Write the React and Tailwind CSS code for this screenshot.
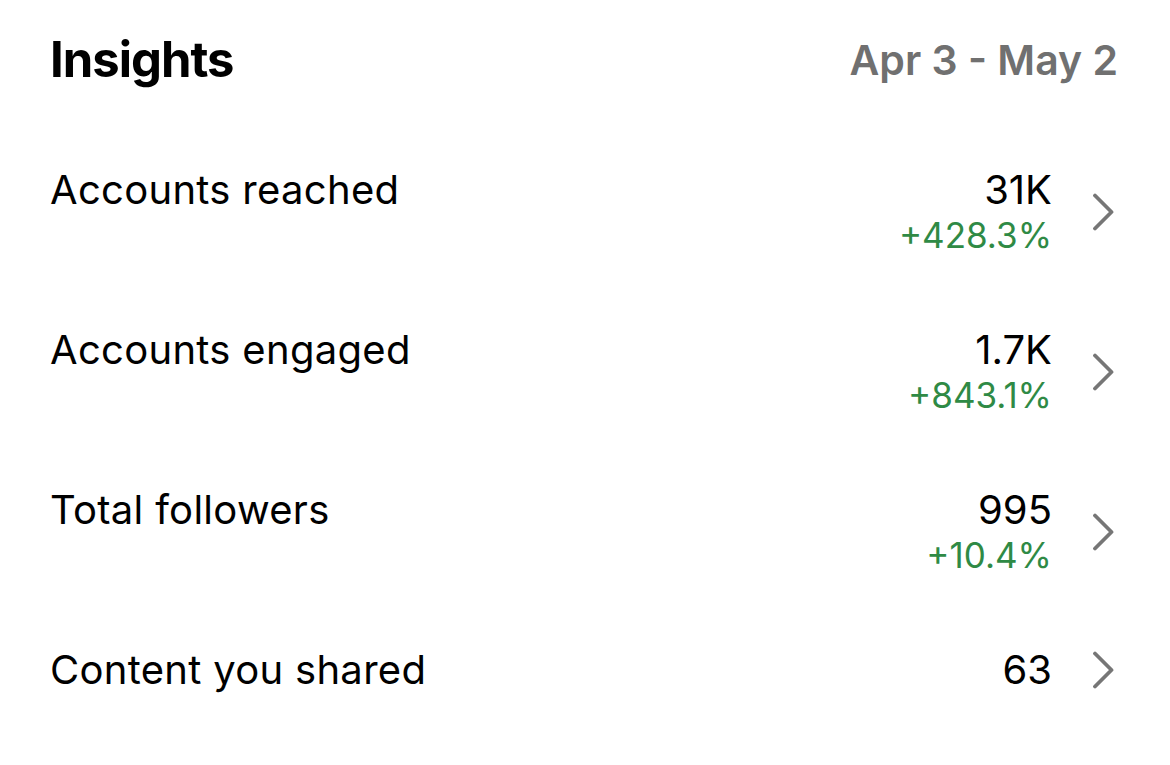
import React from "react";

const rows = [
  { label: "Accounts reached", value: "31K", change: "+428.3%" },
  { label: "Accounts engaged", value: "1.7K", change: "+843.1%" },
  { label: "Total followers", value: "995", change: "+10.4%" },
  { label: "Content you shared", value: "63", change: null },
];

function Chevron() {
  return (
    <svg width="22" height="38" viewBox="0 0 22 38" fill="none" className="shrink-0">
      <path d="M3 2.5 L19.5 19 L3 35.5" stroke="#767676" strokeWidth="3.8" strokeLinecap="round" strokeLinejoin="round" />
    </svg>
  );
}

export default function App() {
  return (
    <div
      className="w-[1170px] h-[765px] bg-white text-black overflow-hidden"
      style={{ fontFamily: "Inter, 'Liberation Sans', sans-serif" }}
    >
      <div className="flex justify-between pl-[50px] pr-[52px] pt-[33px] h-[120px] items-start">
        <div className="text-[49px] font-bold leading-[54px] tracking-[-1px]">Insights</div>
        <div className="text-[41px] font-semibold leading-[54px] text-[#707070]">Apr 3 - May 2</div>
      </div>
      <div className="flex flex-col pl-[50px] pr-[56px]">
        {rows.map((r) => (
          <div key={r.label} className="flex items-start justify-between h-[160px]">
            <div className="text-[40px] leading-[50px] pt-[45px] tracking-[0.3px]">{r.label}</div>
            <div className="flex items-start gap-[40px] pt-[45px]">
              <div className="flex flex-col items-end">
                <div className="text-[40px] leading-[50px]">{r.value}</div>
                {r.change && (
                  <div className="text-[35px] leading-[40px] text-[#2f8a45]">{r.change}</div>
                )}
              </div>
              <div className={r.change ? "pt-[28px]" : "pt-[6px]"}>
                <Chevron />
              </div>
            </div>
          </div>
        ))}
      </div>
    </div>
  );
}
